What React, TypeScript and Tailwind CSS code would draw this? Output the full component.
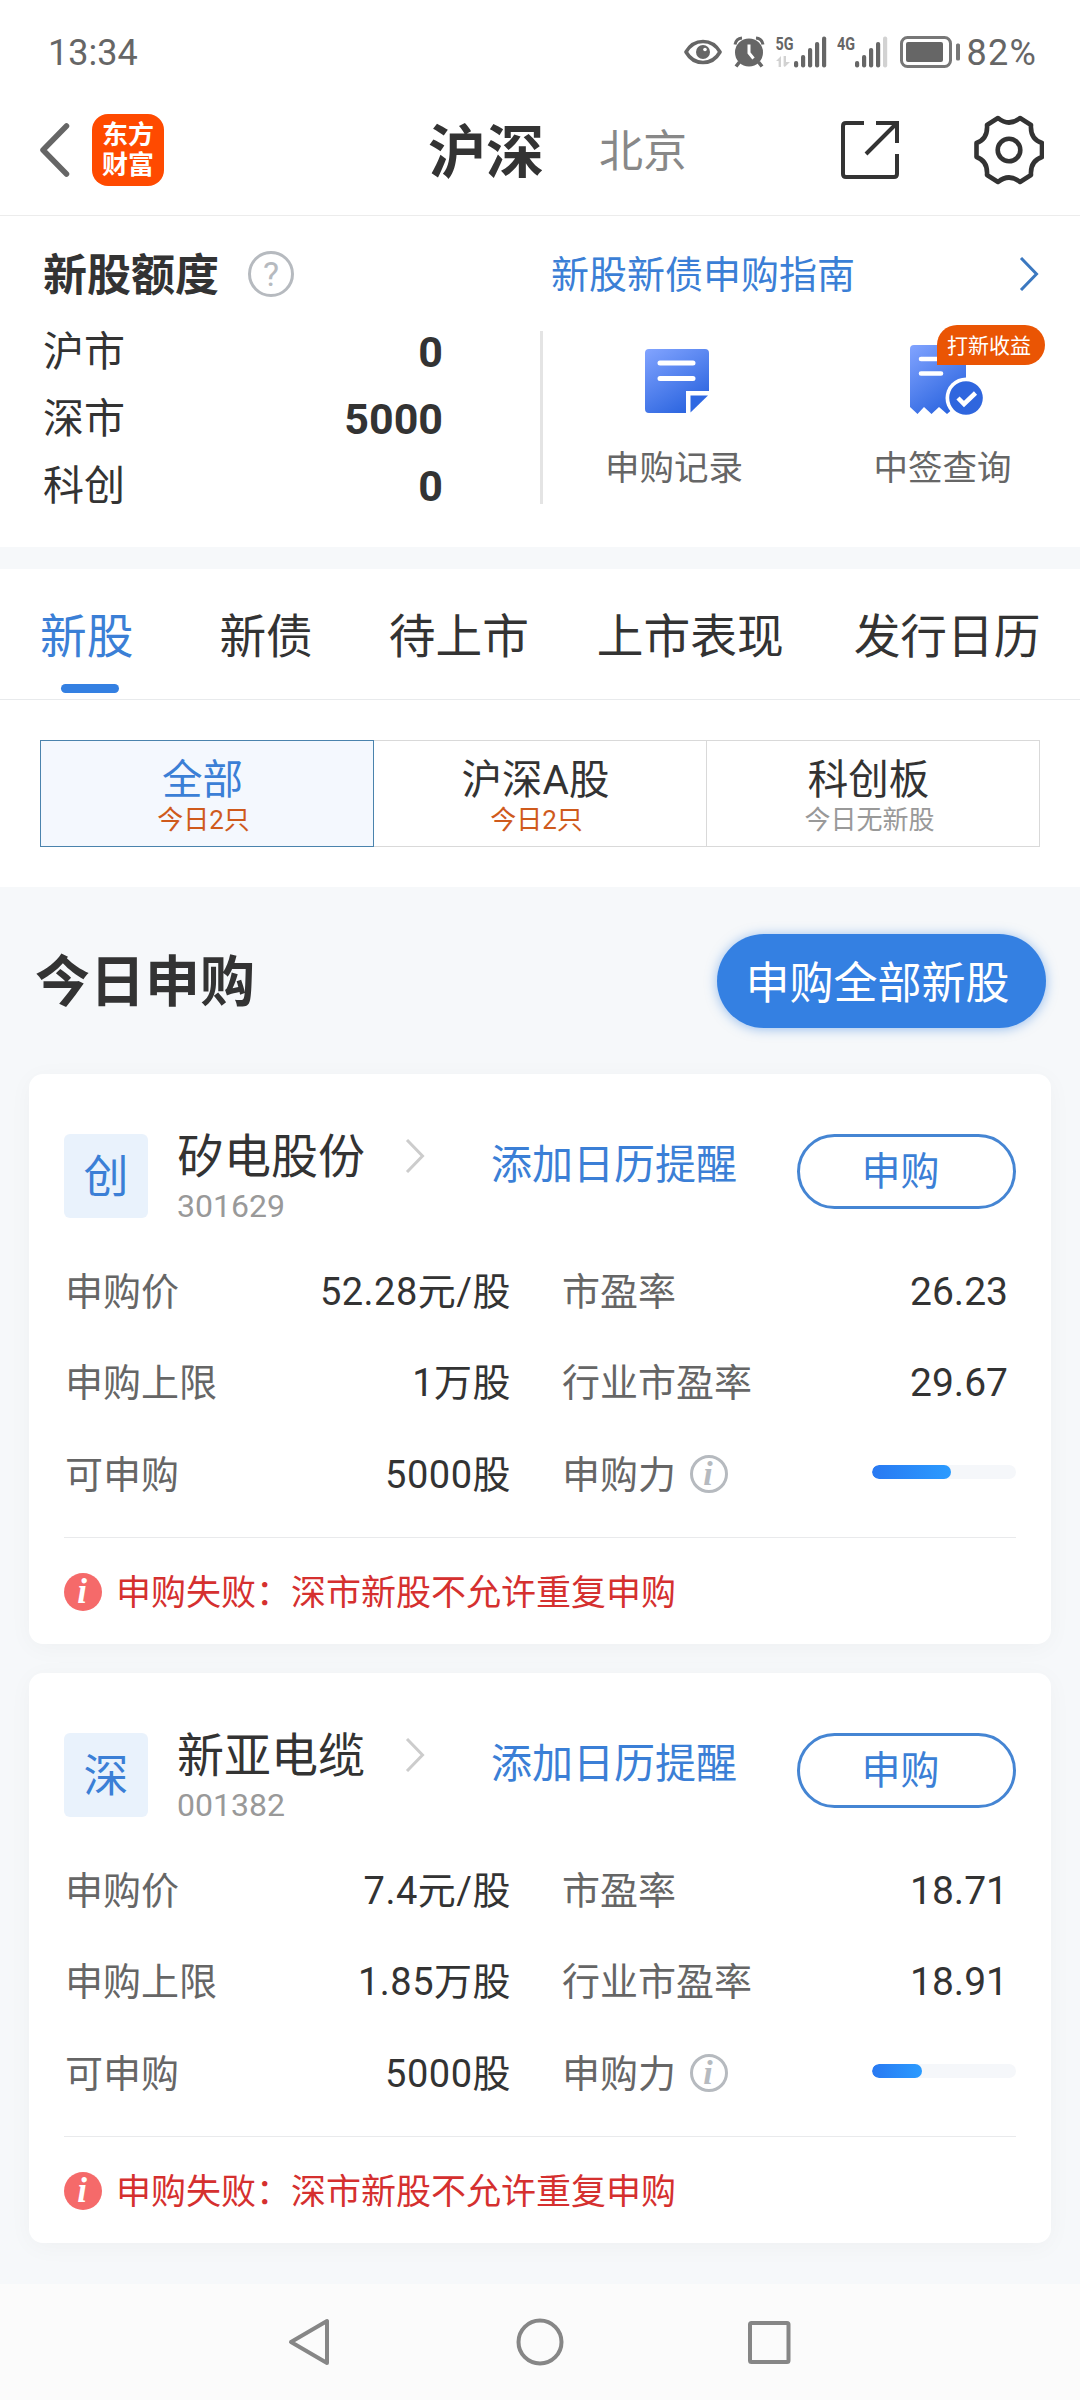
import { useState } from "react";
import clsx from "clsx";

type Stock = {
  tag: string;
  name: string;
  code: string;
  price: string;
  limit: string;
  available: string;
  pe: string;
  industryPe: string;
  power: number;
  error: string;
};

const quotas = [
  { label: "沪市", value: "0" },
  { label: "深市", value: "5000" },
  { label: "科创", value: "0" },
];

const tabs = [
  { label: "新股", className: "" },
  { label: "新债", className: "ml-[86px]" },
  { label: "待上市", className: "ml-[76px]" },
  { label: "上市表现", className: "ml-[68px]" },
  { label: "发行日历", className: "ml-[70px]" },
];

const boards = [
  { label: "全部", note: "今日2只", hasNew: true },
  { label: "沪深A股", note: "今日2只", hasNew: true },
  { label: "科创板", note: "今日无新股", hasNew: false },
];

const stocks: Stock[] = [
  {
    tag: "创",
    name: "矽电股份",
    code: "301629",
    price: "52.28元/股",
    limit: "1万股",
    available: "5000股",
    pe: "26.23",
    industryPe: "29.67",
    power: 55,
    error: "申购失败：深市新股不允许重复申购",
  },
  {
    tag: "深",
    name: "新亚电缆",
    code: "001382",
    price: "7.4元/股",
    limit: "1.85万股",
    available: "5000股",
    pe: "18.71",
    industryPe: "18.91",
    power: 35,
    error: "申购失败：深市新股不允许重复申购",
  },
];

const Chevron = ({ className }: { className?: string }) => (
  <svg viewBox="0 0 20 34" fill="none" stroke="currentColor" strokeWidth="3" className={clsx("h-[34px] w-5 shrink-0", className)}>
    <path d="M2 1 L17.5 17 L2 33" />
  </svg>
);

const StatusBar = () => (
  <div className="flex h-[104px] items-center pl-12 pr-[43px] text-[36px] leading-none text-[#666]">
    <span className="pt-0.5">13:34</span>

    <svg viewBox="0 0 38 26" className="ml-auto h-[26px] w-[38px]">
      <path d="M2 13 C10 -1 28 -1 36 13 C28 27 10 27 2 13 Z" fill="none" stroke="#666" strokeWidth="3.6" strokeLinejoin="round" />
      <circle cx="19" cy="13" r="7" fill="#666" />
      <circle cx="21" cy="10.5" r="1.8" fill="#fff" />
    </svg>

    <svg viewBox="0 0 32 32" className="ml-[11px] h-8 w-8">
      <circle cx="16" cy="16.5" r="14" fill="#666" />
      <path d="M2 8.5 A8 8 0 0 1 9 2 M23 2 A8 8 0 0 1 30 8.5" fill="none" stroke="#666" strokeWidth="3" />
      <path d="M6.5 26 L3 30.5 M25.5 26 L29 30.5" stroke="#666" strokeWidth="3.6" />
      <path d="M16 8.5 V17 L20.5 22.5" fill="none" stroke="#fff" strokeWidth="3" />
    </svg>

    {/* sim 1 */}
    <svg viewBox="0 -8 52 48" className="ml-[10px] h-12 w-[52px]">
      <text x="0.5" y="14" fontSize="19" fontWeight="700" fill="#666" textLength="18" lengthAdjust="spacingAndGlyphs">5G</text>
      <path d="M1 25 L6 20 V31 H3.6 V25 Z M8.6 20 H11 V26 H15 L9.8 31 L8.6 30 Z" fill="#d2d2d2" />
      <g fill="#666">
        <rect x="19" y="25" width="4.2" height="6.5" rx="2" />
        <rect x="26" y="19" width="4.2" height="12.5" rx="2" />
        <rect x="33" y="12" width="4.2" height="19.5" rx="2" />
        <rect x="40" y="6" width="4.2" height="25.5" rx="2" />
        <rect x="47" y="0.5" width="4.2" height="31" rx="2" />
      </g>
    </svg>

    {/* sim 2 */}
    <svg viewBox="0 -8 52 48" className="ml-[10px] h-12 w-[52px]">
      <text x="0" y="14" fontSize="19" fontWeight="700" fill="#666" textLength="18" lengthAdjust="spacingAndGlyphs">4G</text>
      <g fill="#666">
        <rect x="18" y="25" width="4.2" height="6.5" rx="2" />
        <rect x="25" y="19" width="4.2" height="12.5" rx="2" />
        <rect x="32" y="12" width="4.2" height="19.5" rx="2" />
        <rect x="39" y="6" width="4.2" height="25.5" rx="2" />
      </g>
      <rect x="46" y="0.5" width="4.2" height="31" rx="2" fill="#d2d2d2" />
    </svg>

    <svg viewBox="0 0 60 32" className="ml-[11px] h-8 w-[60px]">
      <rect x="1.5" y="1.5" width="49" height="29" rx="6" fill="none" stroke="#777" strokeWidth="3" />
      <rect x="6" y="6" width="37" height="20" rx="2" fill="#666" />
      <rect x="56" y="7.5" width="4" height="17" rx="1.5" fill="#777" />
    </svg>
    <span className="ml-[7px] pt-0.5 tracking-[1.2px]">82%</span>
  </div>
);

const TopBar = () => (
  <div className="flex h-[92px] items-center pl-[39px] pr-9">
    <svg viewBox="0 0 32 56" fill="none" stroke="#666" strokeWidth="5.5" strokeLinecap="round" strokeLinejoin="round" className="h-14 w-8">
      <path d="M27.5 4 L4 28 L27.5 52" />
    </svg>
    <div className="ml-[21px] flex h-[72px] w-[72px] flex-col items-center justify-center rounded-[16px] bg-[#ff4a00] text-[26px] font-bold leading-[30px] text-white">
      <span>东方</span>
      <span>财富</span>
    </div>
    <h1 className="ml-[264px] pt-[6px] text-[58px] font-bold leading-[87px]">沪深</h1>
    <span className="ml-[55px] pt-1 text-[44px] text-[#888]">北京</span>
    <svg viewBox="0 0 58 58" fill="none" stroke="#333" strokeWidth="4" className="ml-auto h-[58px] w-[58px]">
      <path d="M23 2 H5 Q2 2 2 5 V53 Q2 56 5 56 H53 Q56 56 56 53 V33 M35 2 H56 V22 M55 3 L25 33" />
    </svg>
    <svg viewBox="0 0 70 70" fill="none" stroke="#333" strokeWidth="4.6" strokeLinejoin="round" className="ml-[75px] h-[70px] w-[70px]">
      <path d="M24 3 Q35 12 46 3 L57 10 Q56 24 68 28 V42 Q56 46 57 60 L46 67 Q35 58 24 67 L13 60 Q14 46 2.5 42 V28 Q14 24 13 10 Z" />
      <circle cx="35" cy="35" r="11.3" />
    </svg>
  </div>
);

const RecordIcon = () => (
  <svg viewBox="0 0 72 72" className="ml-0.5 h-[72px] w-[72px]">
    <defs>
      <linearGradient id="record" x1="0" y1="0" x2="0.6" y2="1">
        <stop offset="0" stopColor="#82a4ff" />
        <stop offset="1" stopColor="#2d66e0" />
      </linearGradient>
    </defs>
    <path d="M9 4 H65 Q69 4 69 8 V46 H46 V68 H9 Q5 68 5 64 V8 Q5 4 9 4 Z" fill="url(#record)" />
    <path d="M50.5 50.5 H68 L50.5 67.5 Z" fill="#2f68e2" />
    <path d="M20 18 H53 M20 33.5 H53" stroke="#fff" strokeWidth="5" strokeLinecap="round" />
  </svg>
);

const LotteryIcon = () => (
  <svg viewBox="0 0 74 72" className="ml-2 h-[72px] w-[74px]">
    <defs>
      <linearGradient id="lottery" x1="0" y1="0" x2="0.6" y2="1">
        <stop offset="0" stopColor="#82a4ff" />
        <stop offset="1" stopColor="#2d66e0" />
      </linearGradient>
    </defs>
    <path d="M4 0 H52 Q56 0 56 4 V62 L52 58 L45 62 L37 69 L29 62 L21.5 69 L14 62 L7.5 69 L0 62 V4 Q0 0 4 0 Z" fill="url(#lottery)" />
    <path d="M11 14 H31 M11 28.5 H31" stroke="#fff" strokeWidth="4.6" strokeLinecap="round" />
    <circle cx="56" cy="53" r="20.5" fill="#fff" />
    <circle cx="56" cy="53" r="16.8" fill="#2f66de" />
    <path d="M48 53 L54 59 L65.5 48" fill="none" stroke="#fff" strokeWidth="4.5" />
  </svg>
);

const QuotaSection = () => (
  <section className="h-[331px] pt-[35px]">
    <div className="flex h-[46px] items-center pl-[43px] pr-[41px]">
      <h2 className="pt-[3px] text-[44px] font-bold leading-none">新股额度</h2>
      <span className="ml-[29px] flex h-[46px] w-[46px] items-center justify-center rounded-full border-[3px] border-[#b6babf] text-[34px] leading-none text-[#b6babf]">
        ?
      </span>
      <a className="ml-[257px] pt-0.5 text-[38px] text-[#3b7fd6]">新股新债申购指南</a>
      <Chevron className="ml-auto text-[#3b78c0]" />
    </div>

    <div className="mt-5 flex pl-[43px]">
      <ul className="w-[400px] pt-0.5">
        {quotas.map((q) => (
          <li key={q.label} className="flex h-[67px] items-center justify-between">
            <span className="pt-px text-[41px]">{q.label}</span>
            <span className="text-[43px] font-bold">{q.value}</span>
          </li>
        ))}
      </ul>
      <div className="ml-[97px] mt-[14px] h-[173px] w-[3px] bg-[#e4e4e4]" />

      <div className="flex w-[264px] flex-col items-center pt-7 text-[34.5px] leading-[46px] text-[#666]">
        <RecordIcon />
        <span className="mt-7 pr-0.5">申购记录</span>
      </div>
      <div className="relative flex w-[272px] flex-col items-center pt-7 text-[34.5px] leading-[46px] text-[#666]">
        <LotteryIcon />
        <span className="mt-7 pr-px">中签查询</span>
        <span className="absolute left-[130px] top-2 flex h-10 w-[108px] items-center justify-center rounded-[20px] rounded-bl-none bg-[#ea5504] pr-1 pt-0.5 text-[21px] leading-none text-white">
          打新收益
        </span>
      </div>
    </div>
  </section>
);

const Field = ({ label, value }: { label: string; value: string }) => (
  <>
    <span className="pl-px text-[#666]">{label}</span>
    <span className="text-right tracking-[0.5px]">{value}</span>
  </>
);

const StockCard = ({ stock }: { stock: Stock }) => (
  <article className="h-[570px] rounded-[14px] bg-white px-[35px] pt-[60px] shadow-[0_4px_24px_rgba(0,0,0,0.035)]">
    <div className="flex h-[84px] items-start">
      <div className="flex h-[84px] w-[84px] items-center justify-center rounded-[6px] bg-[#e9f2fc] pt-0.5 text-[45px] leading-none text-[#3b7fd6]">
        {stock.tag}
      </div>
      <div className="ml-[29px] w-[188px]">
        <p className="text-[47px] leading-[46px]">{stock.name}</p>
        <p className="mt-[9px] text-[32px] leading-[34px] text-[#999]">{stock.code}</p>
      </div>
      <Chevron className="ml-[40px] mt-[5px] text-[#ccc]" />
      <a className="ml-[66px] mt-[8px] text-[41px] leading-[46px] text-[#3b7fd6]">添加日历提醒</a>
      <button className="ml-auto flex h-[75px] w-[219px] items-center justify-center rounded-full border-[3px] border-[#4585d3] pr-3 pt-0.5 text-[39px] leading-none text-[#3b7fd6]">
        申购
      </button>
    </div>

    <div className="mt-[29px] grid grid-cols-[207px_240px_257px_240px] whitespace-nowrap text-[38px] leading-[91.3px]">
      <Field label="申购价" value={stock.price} />
      <span className="pl-[51px] text-[#666]">市盈率</span>
      <span className="text-right text-[39px]">{stock.pe}</span>
      <Field label="申购上限" value={stock.limit} />
      <span className="pl-[51px] text-[#666]">行业市盈率</span>
      <span className="text-right text-[39px]">{stock.industryPe}</span>
      <Field label="可申购" value={stock.available} />
      <span className="flex items-center pl-[51px] text-[#666]">
        申购力
        <i className="-mt-0.5 ml-[14px] flex h-[38px] w-[38px] items-center justify-center rounded-full border-[3px] border-[#b6babf] pr-0.5 font-['Liberation_Serif',serif] text-[34px] font-bold leading-none text-[#b6babf]">
          i
        </i>
      </span>
      <span className="flex items-center justify-end pb-1.5">
        <span className="-mr-2 h-[14px] w-36 shrink-0 overflow-hidden rounded-full bg-[#f5f7fa]">
          <span
            className="block h-full rounded-full bg-gradient-to-r from-[#2979f2] to-[#2b9bff]"
            style={{ width: `${stock.power}%` }}
          />
        </span>
      </span>
    </div>

    <div className="mt-[16px] h-px bg-[#e9eaec]" />
    <p className="mt-[31px] flex h-12 items-center text-[35px] leading-none text-[#d5302f]">
      <i className="-mt-0.5 mr-[14px] flex h-[38px] w-[38px] items-center justify-center rounded-full bg-[#f56a6a] pr-0.5 font-['Liberation_Serif',serif] font-bold text-white">
        i
      </i>
      <span className="pt-0.5">{stock.error}</span>
    </p>
  </article>
);

const NavBar = () => (
  <nav className="flex h-[116px] bg-[#fbfbfb]">
    <svg viewBox="0 0 1080 116" fill="none" stroke="#868686" strokeWidth="4" strokeLinejoin="round" className="h-[116px] w-full">
      <path d="M327 37 V79 L291 58 Z" />
      <circle cx="540" cy="58" r="21.5" />
      <rect x="750" y="39" width="38.5" height="39" rx="1.5" />
    </svg>
  </nav>
);

export default function App() {
  const [tab, setTab] = useState("新股");
  const [board, setBoard] = useState("全部");

  return (
    <div className="flex h-[2400px] w-[1080px] flex-col overflow-hidden bg-[#f6f8fa] font-['Roboto','Noto_Sans_CJK_SC',sans-serif] text-[#333]">
      <div className="bg-white">
        <header className="h-[216px] border-b border-[#ececec]">
          <StatusBar />
          <TopBar />
        </header>
        <QuotaSection />
      </div>

      <div className="mt-[22px] h-[318px] bg-white">
        <div className="flex h-[131px] border-b border-[#e8eaec] pl-10">
          {tabs.map((t) => (
            <button
              key={t.label}
              onClick={() => setTab(t.label)}
              className={clsx(
                "flex flex-col items-center whitespace-nowrap pt-[38px] text-[46.7px] leading-[60px]",
                t.className,
                tab === t.label && "text-[#3b7fd6]",
              )}
            >
              {t.label}
              {tab === t.label && <span className="ml-[7px] mt-[17px] h-[9px] w-[58px] rounded-full bg-[#3480e2]" />}
            </button>
          ))}
        </div>

        <div className="mx-10 mt-10 flex h-[107px]">
          {boards.map((b) => (
            <button
              key={b.label}
              onClick={() => setBoard(b.label)}
              className={clsx(
                "flex flex-1 flex-col items-center border pr-[7px] pt-[18px]",
                board === b.label ? "border-[#4a83ad] bg-[#f4f8fe]" : "border-l-0 border-[#d9d9d9]",
              )}
            >
              <span className={clsx("pr-0.5 text-[40.5px] leading-[42px]", board === b.label && "text-[#3b7fd6]")}>{b.label}</span>
              <span className={clsx("text-[26px] leading-[38px]", b.hasNew ? "text-[#cf5a1c]" : "text-[#999]")}>{b.note}</span>
            </button>
          ))}
        </div>
      </div>

      <main className="flex-1 px-[29px]">
        <div className="mt-[47px] flex h-[94px] items-center justify-between pl-[6px] pr-[5px]">
          <h2 className="pt-[3px] text-[55px] font-bold">今日申购</h2>
          <button className="h-[94px] w-[329px] rounded-full bg-[#3480e2] pr-2 pt-1.5 text-[44px] text-white shadow-[0_1px_12px_rgba(52,128,226,0.5)]">
            申购全部新股
          </button>
        </div>
        <div className="mt-[46px] flex flex-col gap-[29px]">
          {stocks.map((s) => (
            <StockCard key={s.code} stock={s} />
          ))}
        </div>
      </main>

      <NavBar />
    </div>
  );
}
